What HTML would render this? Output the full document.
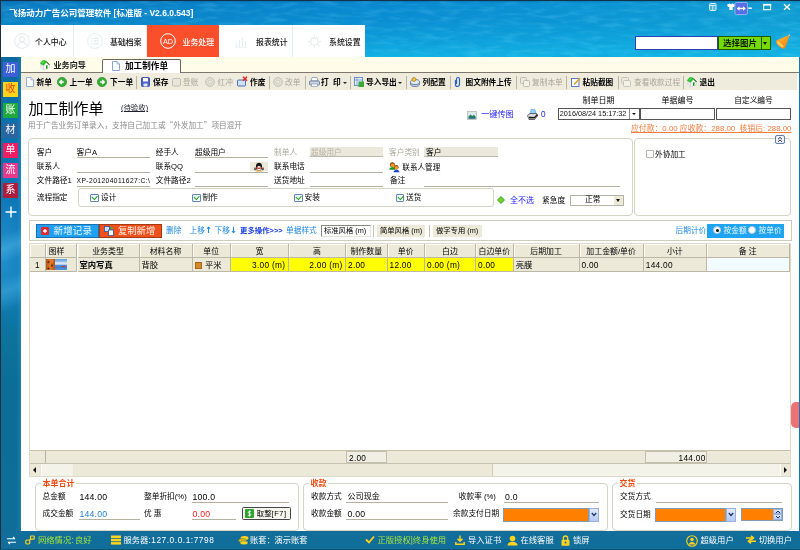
<!DOCTYPE html>
<html lang="zh-CN">
<head>
<meta charset="utf-8">
<title>飞扬动力广告公司管理软件</title>
<style>
*{box-sizing:border-box;margin:0;padding:0}
html,body{width:800px;height:550px;overflow:hidden}
body{font-family:"Liberation Sans","Noto Sans CJK SC",sans-serif;font-size:7.7px;color:#000;position:relative;
 background:#1590c4;}
.a{position:absolute;white-space:nowrap}
#wrap{position:absolute;left:0;top:0;width:800px;height:550px;will-change:transform}
.t{position:absolute;white-space:nowrap;line-height:12px;font-size:7.7px}
#water{left:0;top:0;width:800px;height:550px;
 background:
  linear-gradient(180deg,rgba(4,50,100,.6) 0,rgba(4,50,100,.2) 1.500px,rgba(4,50,100,0) 3px),
  linear-gradient(180deg,rgba(20,185,232,0) 0,rgba(20,185,232,.1) 20px,rgba(20,185,232,.45) 40px,rgba(22,188,234,.8) 57px,rgba(22,188,234,0) 58px),
  linear-gradient(90deg,#0a79c0 0,#0a81c8 25%,#0a8ad2 50%,#0c94d4 75%,#109cd2 100%);}
#leftbar{left:0;top:57px;width:21px;height:474px;background:linear-gradient(160deg,rgba(90,190,235,0) 37%,rgba(90,190,235,.4) 40%,rgba(90,190,235,0) 43%,rgba(90,190,235,0) 46%,rgba(90,190,235,.35) 49%,rgba(90,190,235,0) 53%),radial-gradient(ellipse 26px 60px at 4px 200px,rgba(50,160,225,.55),rgba(50,160,225,0)),linear-gradient(90deg,rgba(255,255,255,0) 80%,rgba(120,210,240,.16) 100%),linear-gradient(180deg,#0a6a9e 0,#0c70aa 15%,#0e78b8 32%,#0f7cb6 48%,#0d749f 58%,#0b6e96 68%,#0e6e98 100%)}
#rightbar{left:798px;top:57px;width:2px;height:474px;background:#1577b5}
#nav{left:1px;top:25.300px;width:364px;height:31.700px;background:#fff}
.nv{position:absolute;top:0;height:32px;font-size:7.900px;line-height:33px;color:#111;font-weight:500;border-right:1px solid #e6ecef}
.nv span{position:absolute;left:34px;top:1px}
.nv.on{background:#fb4f2c;color:#fff;border-right:none}
.ring{position:absolute;left:13px;top:8px;width:15px;height:15px;border:1px solid #e3e8ea;border-radius:50%}
#tabs{left:21px;top:57px;width:777.500px;height:15.500px;background:#fffdea;border-bottom:1.500px solid #7d786b}
#toolbar{left:21px;top:72.500px;width:776px;height:17.500px;background:#efecde}
#main{left:21px;top:72px;width:777.500px;height:459px;background:#fff}
#status{left:0;top:531px;width:800px;height:19px;background:#116e9a}
.sb{position:absolute;left:3px;width:15.200px;height:15px;color:#fff;font-size:10px;line-height:14.500px;text-align:center}
.tb{position:absolute;top:4.300px;font-size:7.7px;line-height:12px;font-weight:bold;white-space:nowrap}
.tb.dis{color:#a9a79b;font-weight:normal}
.sep{position:absolute;top:3px;width:1px;height:13px;background:#b9b6a5}
.ic{position:absolute;top:1px;width:11px;height:11px}
.lbl{position:absolute;font-size:7.7px;line-height:12px;white-space:nowrap}
.ul{position:absolute;height:1px;background:#a5a399}
.box{position:absolute;border:1px solid #d5d3c4;border-radius:4px;background:#fff}
.cb{position:absolute;width:8.600px;height:8.600px;border:1px solid #5f86b4;border-radius:1px;background:linear-gradient(135deg,#e4e8ee,#fff 60%)}
.cb.off{border-color:#b9b7ab;width:7.600px;height:7.600px;background:#fff}.cb.off:after{display:none}
.cb:after{content:"";position:absolute;left:1px;top:.2px;width:4.200px;height:2.600px;border-left:1.700px solid #22a022;border-bottom:1.700px solid #22a022;transform:rotate(-48deg)}
.th{position:absolute;top:0;height:14px;background:#ece9d8;border-right:1px solid #bbb8a6;border-bottom:1px solid #bbb8a6;box-shadow:inset 1px 1px 0 #fbfaf4;text-align:center;font-size:7.900px;line-height:16px;overflow:hidden}
.td{position:absolute;top:14px;height:14px;background:#ece9d8;border-right:1px solid #bbb8a6;border-bottom:1px solid #bbb8a6;font-size:8.300px;line-height:14.500px;padding-left:2px;overflow:hidden}
.y{background:#ffff00}
</style>
</head>
<body>
<div id="wrap">
<div class="a" id="water"></div>
<svg class="a" style="left:0;top:0" width="800" height="57" viewBox="0 0 800 57"><filter id="wt" x="0" y="0" width="100%" height="100%"><feTurbulence type="fractalNoise" baseFrequency="0.05 0.22" numOctaves="3" seed="7"/><feColorMatrix type="matrix" values="0 0 0 0 .25  0 0 0 0 .8  0 0 0 0 .98  1.6 0 0 0 -0.72"/></filter><rect width="800" height="57" filter="url(#wt)" opacity=".3"/><filter id="wd" x="0" y="0" width="100%" height="100%"><feTurbulence type="fractalNoise" baseFrequency="0.045 0.2" numOctaves="3" seed="21"/><feColorMatrix type="matrix" values="0 0 0 0 0  0 0 0 0 .25  0 0 0 0 .5  1.6 0 0 0 -0.72"/></filter><rect width="800" height="57" filter="url(#wd)" opacity=".3"/></svg>
<div class="a" id="leftbar"></div>
<div class="a" id="rightbar"></div>

<!-- title -->
<div class="t" style="left:9.200px;top:6.500px;color:#fff;font-weight:bold;font-size:8.500px">飞扬动力广告公司管理软件 [标准版 - V2.6.0.543]</div>

<!-- nav -->
<div class="a" id="nav">
 <div class="nv" style="left:0;width:72.500px"><svg class="a" style="left:13px;top:8px" width="16" height="16" viewBox="0 0 16 16"><circle cx="8" cy="8" r="7.400" fill="none" stroke="#e6ebee" stroke-width="1"/><circle cx="8" cy="6.300" r="2.500" fill="none" stroke="#e3e8eb" stroke-width="1"/><path d="M3.300 12.800c.5-4.500 8.900-4.500 9.400 0" fill="none" stroke="#e3e8eb" stroke-width="1"/></svg><span>个人中心</span></div>
 <div class="nv" style="left:72.500px;width:73.500px"><svg class="a" style="left:13.500px;top:8px" width="16" height="16" viewBox="0 0 16 16"><circle cx="8" cy="8" r="7.400" fill="none" stroke="#eaeef0" stroke-width="1"/><path d="M4 5.200h1.300M6.500 5.200h5.500M4 8h1.300M6.500 8h5.500M4 10.800h1.300M6.500 10.800h5.500" stroke="#e1e7ea" stroke-width="1.100"/></svg><span style="left:36.500px">基础档案</span></div>
 <div class="nv on" style="left:146px;width:72px"><svg class="a" style="left:13px;top:8px" width="16" height="16" viewBox="0 0 16 16"><circle cx="8" cy="8" r="7.300" fill="none" stroke="#fff" stroke-width="1"/><text x="8" y="10.600" font-size="7.300" text-anchor="middle" fill="#fff" font-family="Liberation Sans, sans-serif">AD</text></svg><span style="left:35.500px">业务处理</span></div>
 <div class="nv" style="left:218px;width:73.500px"><svg class="a" style="left:16px;top:10px" width="12" height="13" viewBox="0 0 12 13"><path d="M1.500 12V8.500M4.500 12V5M7.500 12V2M10.500 12V6" stroke="#e6ecef" stroke-width="1.100"/><path d="M0 12.500h12" stroke="#eef2f4" stroke-width=".8"/></svg><span style="left:37px">报表统计</span></div>
 <div class="nv" style="left:291.500px;width:72.500px;border-right:none"><svg class="a" style="left:14px;top:9px" width="15" height="15" viewBox="0 0 15 15"><circle cx="7.500" cy="7.500" r="3.800" fill="none" stroke="#e3e9ec" stroke-width="1"/><path d="M7.500 .8v2M7.500 12.200v2M.8 7.500h2M12.200 7.500h2M2.800 2.800l1.400 1.400M10.800 10.800l1.400 1.400M2.800 12.200l1.400-1.400M10.800 4.200l1.400-1.400" stroke="#e3e9ec" stroke-width="1"/></svg><span style="left:36.500px">系统设置</span></div>
</div>

<!-- search -->
<div class="a" style="left:635px;top:36px;width:83px;height:14px;background:#fff;border:1px solid #2a3fb0"></div>
<div class="a" style="left:718px;top:36px;width:44px;height:14px;background:#74da00;border:1px solid #1f5800;font-size:8.5px;line-height:12px;text-align:center;font-weight:bold;color:#102000">选择图片</div>
<div class="a" style="left:761px;top:36px;width:9.800px;height:14px;background:#74da00;border:1px solid #1f5800"><i style="position:absolute;left:1.400px;top:4.500px;border:2.500px solid transparent;border-top:3px solid #111;border-bottom:none"></i></div>
<svg class="a" style="left:774px;top:33px" width="20" height="18" viewBox="0 0 20 18"><defs><linearGradient id="cg" x1="0" y1="0" x2="1" y2="1"><stop offset="0" stop-color="#ffc24a"/><stop offset=".55" stop-color="#fb9a1e"/><stop offset="1" stop-color="#e87808"/></linearGradient></defs><path d="M15.600 1.800L2.300 7.600Q1.500 12 10.300 15.700Q11.500 15.500 15.600 1.800z" fill="url(#cg)"/><ellipse cx="6.300" cy="11.500" rx="5.600" ry="2.300" transform="rotate(42 6.300 11.500)" fill="#f08a10"/><ellipse cx="6.200" cy="11.300" rx="4.300" ry="1.500" transform="rotate(42 6.200 11.300)" fill="#ffc85a"/><circle cx="15.300" cy="2.100" r=".7" fill="#fff3d8"/></svg>
<!-- window buttons -->
<svg class="a" style="left:705px;top:2px" width="95" height="16" viewBox="0 0 95 16">
 <rect x="4.500" y="1.500" width="6.500" height="7" rx="1" fill="rgba(255,255,255,.25)" stroke="#d9eef8" stroke-width="1"/><path d="M5 3.500h5.500M7.800 3.500v5" stroke="#d9eef8" stroke-width=".9"/><path d="M6 .8v1.200M9.500 .8v1.200" stroke="#d9eef8" stroke-width=".8"/>
 <path d="M22 2.800l2.500-1.200 1.500 1 1.500-1 2.500 1.200-1 2.200h-1.300v3h-3.400v-3H23z" fill="#fff"/>
 <rect x="30" y=".5" width="12.500" height="12" rx="1.500" fill="#5570e4" stroke="#a9b8f4" stroke-width=".8"/><path d="M32.500 6.500h7.500" stroke="#fff" stroke-width="1.400" fill="none"/><path d="M31.800 6.500l2.700-2.200v4.400zM40.700 6.500l-2.700-2.200v4.400z" fill="#fff"/>
 <path d="M43.300 6.200h3.500" stroke="#fff" stroke-width="1.500"/>
 <rect x="58.600" y="2.700" width="7" height="5" fill="none" stroke="#fff" stroke-width="1.100"/><path d="M58 2.700h8.200" stroke="#fff" stroke-width="1.700"/>
 <path d="M79 2.200l6 5.600M85 2.200l-6 5.600" stroke="#fff" stroke-width="1.500"/>
</svg>

<div class="a" id="main"></div>
<div class="a" id="tabs">
 <svg class="a" style="left:19.200px;top:2.800px" width="10" height="10" viewBox="0 0 10 10"><path d="M.8 4.500L3.600 5.800V9.800L.8 7.600z" fill="#f4f2f6" stroke="#b9b3c4" stroke-width=".4"/><path d="M3.600 5.800L6.500 2.200 9.300 5V7.800L3.600 9.800z" fill="#fff" stroke="#b9b3c4" stroke-width=".4"/><path d="M6.500 1.200L9.900 4.600 9.200 5.200 6.200 2.200z" fill="#0e6a12"/><path d="M.1 3.600L3 .2 6.600 1.200 3.600 5.300z" fill="#22c422" stroke="#129416" stroke-width=".4"/><path d="M1.600 2.900L3.200 1.200 4.600 1.600 3 3.500z" fill="#5cf05c" opacity=".8"/><path d="M6 5.600L7.500 5V8.400L6 9z" fill="#0f9a1a"/></svg>
 <div class="t" style="left:32.500px;top:3px;font-weight:bold;color:#222;font-size:8.100px">业务向导</div>
 <div class="a" style="left:81px;top:1.500px;width:78.500px;height:14.500px;background:#fff;border:1.500px solid #6a665b;border-bottom:none;border-radius:2px 2px 0 0"></div>
 <svg class="a" style="left:91px;top:4px" width="8" height="10" viewBox="0 0 8 10"><path d="M.5.5h4.500L7.500 3v6.500h-7z" fill="#fff" stroke="#7b9bd0" stroke-width=".9"/><path d="M5 .5V3h2.500" fill="#cfe0f5" stroke="#7b9bd0" stroke-width=".7"/></svg>
 <div class="t" style="left:104px;top:3px;font-weight:bold;font-size:8.600px">加工制作单</div>
</div>
<div class="a" id="toolbar">
 <svg class="a" style="left:5px;top:4.700px" width="8" height="10" viewBox="0 0 8 10"><path d="M.5.5h4.500L7.500 3v6.500h-7z" fill="#fff" stroke="#8aa7d6" stroke-width=".9"/><path d="M5 .5V3h2.500" fill="#d5e4f7" stroke="#8aa7d6" stroke-width=".7"/></svg>
 <div class="tb" style="left:15.5px">新单</div>
 <svg class="a" style="left:36px;top:4.700px" width="10" height="10" viewBox="0 0 10 10"><circle cx="5" cy="5" r="4.600" fill="#35b035" stroke="#1d7a1d" stroke-width=".6"/><path d="M6.800 5H3M4.800 3L2.800 5l2 2" stroke="#fff" stroke-width="1.500" fill="none"/></svg>
 <div class="tb" style="left:48.5px">上一单</div>
 <svg class="a" style="left:76px;top:4.700px" width="10" height="10" viewBox="0 0 10 10"><circle cx="5" cy="5" r="4.600" fill="#35b035" stroke="#1d7a1d" stroke-width=".6"/><path d="M3.200 5h3.800M5.200 3l2 2-2 2" stroke="#fff" stroke-width="1.500" fill="none"/></svg>
 <div class="tb" style="left:89px">下一单</div>
 <i class="sep" style="left:115px"></i>
 <svg class="a" style="left:120px;top:4.700px" width="9" height="10" viewBox="0 0 9 10"><rect x=".5" y=".5" width="8" height="9" rx="1" fill="#4a62c8" stroke="#2c3f9a" stroke-width=".8"/><rect x="2" y="1" width="5" height="3.500" fill="#fff"/><rect x="2.500" y="6.500" width="4" height="3" fill="#dfe5f7"/></svg>
 <div class="tb" style="left:132px">保存</div>
 <svg class="a" style="left:151px;top:4.700px" width="9" height="10" viewBox="0 0 9 10"><rect x=".5" y="1.500" width="8" height="7.500" rx="1" fill="#e9e7dc" stroke="#bdbaad" stroke-width=".9"/></svg>
 <div class="tb dis" style="left:162px">登账</div>
 
 <svg class="a" style="left:184px;top:4.700px" width="10" height="10" viewBox="0 0 10 10"><circle cx="5" cy="5" r="4.300" fill="#e9e7dc" stroke="#b8b5a8" stroke-width=".9"/><circle cx="5" cy="5" r="2.200" fill="none" stroke="#c5c2b5" stroke-width=".8"/></svg>
 <div class="tb dis" style="left:196.5px">红冲</div>
 <svg class="a" style="left:216px;top:3.700px" width="11" height="11" viewBox="0 0 11 11"><rect x=".5" y="4" width="8" height="6" rx="1" fill="#cfe0fa" stroke="#3c62b8" stroke-width=".9"/><path d="M6 .8l4 4M10 .8l-4 4" stroke="#e02020" stroke-width="1.400"/></svg>
 <div class="tb" style="left:229px">作废</div>
 <i class="sep" style="left:248px"></i>
 <svg class="a" style="left:252px;top:4.700px" width="10" height="10" viewBox="0 0 10 10"><circle cx="5" cy="5" r="4.300" fill="#e9e7dc" stroke="#b8b5a8" stroke-width=".9"/><circle cx="5" cy="5" r="2.200" fill="none" stroke="#c5c2b5" stroke-width=".8"/></svg>
 <div class="tb dis" style="left:264px">改单</div>
 <i class="sep" style="left:283.5px"></i>
 <svg class="a" style="left:288px;top:4.700px" width="11" height="10" viewBox="0 0 11 10"><path d="M3 .5h5l1 3.500H2z" fill="#fff" stroke="#7a8aa8" stroke-width=".7"/><rect x=".5" y="4" width="10" height="4" rx="1" fill="#c9d3e6" stroke="#5d6c8c" stroke-width=".8"/><rect x="2.500" y="7" width="6" height="2.500" fill="#fff" stroke="#7a8aa8" stroke-width=".6"/></svg>
 <div class="tb" style="left:300px">打&nbsp;&nbsp;印</div>
 <i class="a" style="left:322px;top:9px;border:2px solid transparent;border-top:2.500px solid #222;border-bottom:none"></i>
 <i class="sep" style="left:329px"></i>
 <svg class="a" style="left:333px;top:4.700px" width="10" height="10" viewBox="0 0 10 10"><rect x=".5" y=".5" width="8" height="8" fill="#eaf1fb" stroke="#5f86c6" stroke-width=".9"/><path d="M.5 3h8M3 .5v8" stroke="#5f86c6" stroke-width=".7"/><rect x="4.500" y="4.500" width="5.500" height="5.500" fill="#3aa83a"/></svg>
 <div class="tb" style="left:345px">导入导出</div>
 <i class="a" style="left:377px;top:9px;border:2px solid transparent;border-top:2.500px solid #222;border-bottom:none"></i>
 <i class="sep" style="left:384.5px"></i>
 <svg class="a" style="left:389px;top:4.700px" width="10" height="10" viewBox="0 0 10 10"><ellipse cx="5" cy="7" rx="4.500" ry="2.500" fill="#c7d4e8" stroke="#55698f" stroke-width=".8"/><ellipse cx="5" cy="5" rx="4.500" ry="2.500" fill="#e6edf8" stroke="#55698f" stroke-width=".8"/><circle cx="4" cy="2.500" r="2" fill="#f2c53d" stroke="#9a6c10" stroke-width=".6"/></svg>
 <div class="tb" style="left:401.5px">列配置</div>
 <i class="sep" style="left:429px"></i>
 <svg class="a" style="left:433px;top:3.700px" width="7" height="12" viewBox="0 0 7 12"><path d="M1.500 4v4.500a2 2 0 004 0V3a1.500 1.500 0 00-3 0v5" fill="none" stroke="#2d5fc4" stroke-width="1.200"/></svg>
 <div class="tb" style="left:444.5px">图文附件上传</div>
 <i class="sep" style="left:494.5px"></i>
 <svg class="a" style="left:498.5px;top:4.700px" width="10" height="10" viewBox="0 0 10 10"><rect x=".5" y=".5" width="6" height="6" rx="1" fill="#eceade" stroke="#b9b6a8" stroke-width=".9"/><rect x="3.500" y="3.500" width="6" height="6" rx="1" fill="#f3f1e8" stroke="#b9b6a8" stroke-width=".9"/></svg>
 <div class="tb dis" style="left:511px">复制本单</div>
 <i class="sep" style="left:545px"></i>
 <svg class="a" style="left:549.5px;top:4.700px" width="10" height="10" viewBox="0 0 10 10"><rect x=".5" y="1.500" width="7.500" height="8" fill="#fff" stroke="#4a6fbd" stroke-width=".9"/><path d="M3.500 7L9 1.200" stroke="#e0a020" stroke-width="1.600"/><path d="M3 7.500l1-.3-.7-.7z" fill="#333"/></svg>
 <div class="tb" style="left:561.5px">粘贴截图</div>
 <i class="sep" style="left:596.5px"></i>
 <svg class="a" style="left:600px;top:4.700px" width="10" height="10" viewBox="0 0 10 10"><rect x=".5" y=".5" width="7" height="6" rx="1" fill="#eceade" stroke="#c2bfb2" stroke-width=".9"/><rect x="2.500" y="3.500" width="7" height="6" rx="1" fill="#f3f1e8" stroke="#c2bfb2" stroke-width=".9"/></svg>
 <div class="tb dis" style="left:613px">查看收款过程</div>
 <i class="sep" style="left:662px"></i>
 <svg class="a" style="left:666px;top:4.200px" width="10" height="10" viewBox="0 0 10 10"><path d="M.8 4.500L3.600 5.800V9.800L.8 7.600z" fill="#f4f2f6" stroke="#b9b3c4" stroke-width=".4"/><path d="M3.600 5.800L6.500 2.200 9.300 5V7.800L3.600 9.800z" fill="#fff" stroke="#b9b3c4" stroke-width=".4"/><path d="M6.500 1.200L9.900 4.600 9.200 5.200 6.200 2.200z" fill="#0e6a12"/><path d="M.1 3.600L3 .2 6.600 1.200 3.600 5.300z" fill="#22c422" stroke="#129416" stroke-width=".4"/><path d="M1.600 2.900L3.200 1.200 4.600 1.600 3 3.500z" fill="#5cf05c" opacity=".8"/><path d="M6 5.600L7.500 5V8.400L6 9z" fill="#0f9a1a"/></svg>
 <div class="tb" style="left:678.5px">退出</div>
 </div>
<!-- sidebar buttons -->
<div class="sb" style="top:62px;background:#3f5fd8;color:#fff">加</div>
<div class="sb" style="top:82px;background:#ffd21c;color:#e0401c">收</div>
<div class="sb" style="top:102.5px;background:#1fa83c;color:#fff">账</div>
<div class="sb" style="top:123px;background:#2c66a0;color:#fff">材</div>
<div class="sb" style="top:143px;background:#ee1e62;color:#fff">单</div>
<div class="sb" style="top:163px;background:#e83a8c;color:#fff">流</div>
<div class="sb" style="top:183px;background:#ae1c3c;color:#fff">系</div>
<svg class="a" style="left:5px;top:206px" width="12" height="12" viewBox="0 0 12 12"><path d="M6 0.500v11M0.500 6h11" stroke="#fff" stroke-width="1.400"/></svg>
<!-- header -->
<div class="t" style="left:28.500px;top:99px;font-size:15px;line-height:20px">加工制作单</div>
<div class="t" style="left:121px;top:102px;font-size:7.400px;text-decoration:underline;color:#223">(待验收)</div>
<div class="t" style="left:28px;top:119.300px;color:#8a8a8a;font-size:7.650px">用于广告业务订单录入，支持自己加工或<span style="font-family:'Noto Sans CJK SC',sans-serif">“</span>外发加工<span style="font-family:'Noto Sans CJK SC',sans-serif">”</span>项目混开</div>
<svg class="a" style="left:467px;top:110.500px" width="10" height="9" viewBox="0 0 10 9"><rect x=".4" y=".4" width="9.200" height="8.200" fill="#e2e2e2" stroke="#a8a8a8" stroke-width=".6"/><rect x="1.500" y="1.500" width="7" height="6" fill="#d6ecfa"/><path d="M1.500 5.500l2-2 1.800 1.500 1.500-1.200 1.700 1.700v2h-7z" fill="#2a7f68"/><path d="M1.500 6.500h7v1h-7z" fill="#1d5f8a"/></svg>
<div class="t" style="left:481px;top:109px;color:#1a1aff;font-size:8.200px">一键传图</div>
<svg class="a" style="left:527px;top:108.800px" width="11" height="11" viewBox="0 0 11 11"><path d="M4 .5h4l1.200 4.500H3z" fill="#8fd0ff" stroke="#4a90c8" stroke-width=".5"/><path d="M.5 6.500L3 4.500h6.500l1 2.500-3 3.500H2z" fill="#d8dce0" stroke="#333" stroke-width=".7"/><path d="M2 8.500l5.500.2 3-3.200" stroke="#111" stroke-width="1.300" fill="none"/><path d="M2.500 10h5" stroke="#555" stroke-width=".8"/></svg>
<div class="t" style="left:541px;top:109px;color:#1a1aff;font-size:8.200px">0</div>
<div class="t" style="left:582.500px;top:95.300px;font-size:8px">制单日期</div>
<div class="t" style="left:661.500px;top:95.300px;font-size:8px">单据编号</div>
<div class="t" style="left:734.300px;top:95.300px;font-size:7.700px">自定义编号</div>
<div class="a" style="left:558px;top:108px;width:82px;height:12px;background:#fff;border:1px solid #555"><span class="t" style="left:.8px;top:-1px;font-size:7.300px;color:#111;letter-spacing:-.02px">2016/08/24 15:17:32</span><i class="a" style="left:69.500px;top:0;width:10.500px;height:10px;border-left:1px solid #888;background:#fff"></i><i class="a" style="left:72.800px;top:3.800px;border:2.300px solid transparent;border-top:2.800px solid #111;border-bottom:none"></i></div>
<div class="a" style="left:640px;top:108px;width:75px;height:12px;background:#fff;border:1px solid #555"></div>
<div class="a" style="left:716px;top:108px;width:75px;height:12px;background:#fff;border:1px solid #555"></div>
<div class="t" style="left:631px;top:122.5px;color:#f47a3a;text-decoration:underline;font-size:7.850px">应付款：0.00 应收款：288.00&nbsp; 核销后: 288.00</div>

<!-- form -->
<div class="box" style="left:28px;top:138px;width:605px;height:78px"></div>
<div class="box" style="left:634px;top:138px;width:157px;height:78px"></div>
<div class="t" style="left:36.8px;top:146.8px;">客户</div><div class="t" style="left:76.6px;top:146.8px;">客户A</div><i class="ul" style="left:77px;top:157.3px;width:73px;background:#b3b09f"></i>
<div class="t" style="left:155.7px;top:146.8px;">经手人</div><div class="t" style="left:195px;top:146.8px;">超级用户</div><i class="ul" style="left:195px;top:157.3px;width:73px;background:#b3b09f"></i>
<div class="t" style="left:274px;top:146.8px;color:#aaa79b">制单人</div><div class="a" style="left:310px;top:147px;width:73px;height:10px;background:#ebe9dc;border-bottom:1px solid #bdbaab"></div><div class="t" style="left:311px;top:146.8px;color:#b5b2a6">超级用户</div>
<div class="t" style="left:389px;top:146.8px;color:#aaa79b">客户类别</div><div class="a" style="left:424px;top:147px;width:74px;height:10px;background:#ebe9dc;border-bottom:1px solid #bdbaab"></div><div class="t" style="left:426px;top:146.8px;">客户</div>
<div class="t" style="left:36.8px;top:161.0px;">联系人</div><i class="ul" style="left:77px;top:171.7px;width:73px;background:#b3b09f"></i>
<div class="t" style="left:155.7px;top:161.0px;">联系QQ</div><i class="ul" style="left:195px;top:171.7px;width:73px;background:#b3b09f"></i>
<div class="a" style="left:249.500px;top:162px;width:18.300px;height:9.300px;background:#ece9d8"></div><svg class="a" style="left:254px;top:161.800px" width="10" height="10" viewBox="0 0 10 10"><ellipse cx="5" cy="4.800" rx="3.100" ry="4" fill="#1a1a1a"/><ellipse cx="5" cy="6.300" rx="2" ry="2.300" fill="#fff"/><path d="M1.300 5.600Q.3 7.500 1.600 8M8.700 5.600Q9.700 7.500 8.400 8" stroke="#1a1a1a" stroke-width="1.200" fill="none"/><path d="M2.300 5q2.700 1.500 5.400 0v1.200q-2.700 1.500-5.400 0z" fill="#e02a1c"/><ellipse cx="3.400" cy="9.100" rx="1.500" ry=".7" fill="#f2a818"/><ellipse cx="6.600" cy="9.100" rx="1.500" ry=".7" fill="#f2a818"/></svg>
<div class="t" style="left:274px;top:161.0px;">联系电话</div><i class="ul" style="left:310px;top:171.7px;width:73px;background:#b3b09f"></i>
<svg class="a" style="left:389px;top:161.800px" width="11" height="11" viewBox="0 0 11 11"><circle cx="3.400" cy="2.800" r="2.500" fill="#8a4a14"/><circle cx="3.600" cy="3.400" r="1.800" fill="#f59a1c"/><path d="M.3 7.800c0-3.600 6.200-3.600 6.200 0z" fill="#189a28"/><circle cx="7.300" cy="5.300" r="2.300" fill="#8a4a14"/><circle cx="7.400" cy="5.800" r="1.700" fill="#f59a1c"/><path d="M4.500 10.300c0-3.400 6-3.400 6 0z" fill="#1a44d8"/></svg>
<div class="t" style="left:402.3px;top:162.0px;font-size:7.600px">联系人管理</div>
<div class="t" style="left:36.8px;top:175.0px;">文件路径1</div><div class="t" style="left:76.6px;top:175.0px;font-size:6.700px;letter-spacing:.42px">XP-201204011627:C:&#92;</div><i class="ul" style="left:77px;top:185.7px;width:73px;background:#b3b09f"></i>
<div class="t" style="left:155.7px;top:175.0px;">文件路径2</div><i class="ul" style="left:195px;top:185.7px;width:73px;background:#b3b09f"></i>
<div class="t" style="left:274px;top:175.0px;">送货地址</div><i class="ul" style="left:310px;top:185.7px;width:73px;background:#b3b09f"></i>
<div class="t" style="left:390px;top:175.0px;">备注</div><i class="ul" style="left:424px;top:185.7px;width:196px;background:#b3b09f"></i>
<div class="t" style="left:36.8px;top:191.8px;">流程指定</div>
<div class="box" style="left:78.300px;top:188.200px;width:416px;height:19.200px;border-radius:3px"></div>
<i class="cb" style="left:90.2px;top:193.5px"></i><div class="t" style="left:101px;top:191.8px;">设计</div>
<i class="cb" style="left:192.2px;top:193.5px"></i><div class="t" style="left:202.4px;top:191.8px;">制作</div>
<i class="cb" style="left:294.2px;top:193.5px"></i><div class="t" style="left:304.6px;top:191.8px;">安装</div>
<i class="cb" style="left:395.8px;top:193.5px"></i><div class="t" style="left:406px;top:191.8px;">送货</div>
<svg class="a" style="left:497px;top:196px" width="8" height="8" viewBox="0 0 8 8"><path d="M4 .5L7.500 4 4 7.500.5 4z" fill="#6ad12e" stroke="#2e8a10" stroke-width=".8"/></svg>
<div class="t" style="left:510px;top:194.5px;color:#1a1aff;font-size:8px">全不选</div>
<div class="t" style="left:542px;top:194.5px;">紧急度</div>
<div class="a" style="left:570px;top:195px;width:54px;height:11px;background:#fff;border:1px solid #b5b2a3"><span class="t" style="left:14px;top:-2px">正常</span><i class="a" style="left:43px;top:0;width:9px;height:9px;background:#ece9d8"></i><i class="a" style="left:45px;top:3px;border:2.500px solid transparent;border-top:3px solid #111;border-bottom:none"></i></div>
<i class="cb off" style="left:646px;top:150.2px"></i><div class="t" style="left:655px;top:149px;">外协加工</div>
<svg class="a" style="left:775px;top:135px" width="10" height="9" viewBox="0 0 10 9"><rect x=".5" y=".5" width="9" height="8" rx="1.500" fill="#eef3fa" stroke="#4f6f9f" stroke-width=".9"/><path d="M3 4.200l2-1.800 2 1.800M3 6.800L5 5l2 1.800" stroke="#222" stroke-width=".9" fill="none"/></svg>
<!-- grid toolbar -->
<div class="a" style="left:29px;top:220px;width:762.500px;height:21px;background:#fff;border:1px solid #cfccbc"></div>
<div class="a" style="left:36px;top:224px;width:63px;height:14px;background:#1fa0f0;border:1px solid #1a6fb0"></div>
<svg class="a" style="left:41px;top:227px" width="8" height="8" viewBox="0 0 8 8"><rect width="8" height="8" rx="1" fill="#e8262a"/><path d="M4 2v4M2 4h4" stroke="#fff" stroke-width="1.300"/></svg>
<div class="t" style="left:53.5px;top:225.3px;color:#e8f8ff;font-size:9.500px;letter-spacing:.15px">新增记录</div>
<div class="a" style="left:99px;top:224px;width:63px;height:14px;background:#f0501c;border:1px solid #a83a12"></div>
<svg class="a" style="left:104px;top:226px" width="10" height="10" viewBox="0 0 10 10"><rect x=".5" y=".5" width="5" height="5" fill="#cfe4ff" stroke="#2a4fb0" stroke-width=".8"/><rect x="4.500" y="4" width="5" height="5.500" fill="#fff" stroke="#2a4fb0" stroke-width=".8"/><circle cx="7.500" cy="2" r="1.300" fill="#3ab03a"/></svg>
<div class="t" style="left:118px;top:225.3px;color:#fff0e8;font-size:9.300px">复制新增</div>
<div class="t" style="left:166px;top:225.3px;color:#1886e0">删除</div>
<div class="t" style="left:189.5px;top:225.3px;color:#1886e0">上移<span style="font-family:'DejaVu Sans',sans-serif;font-size:8.500px;line-height:8px;font-weight:bold">↑</span></div>
<div class="t" style="left:214.5px;top:225.3px;color:#1886e0">下移<span style="font-family:'DejaVu Sans',sans-serif;font-size:8.500px;line-height:8px;font-weight:bold">↓</span></div>
<div class="t" style="left:240px;top:225.3px;color:#1a3fe0;font-weight:bold;font-size:7.400px">更多操作&gt;&gt;&gt;</div>
<div class="t" style="left:286px;top:225.3px;color:#1886e0">单据样式</div>
<div class="a" style="left:321px;top:225px;width:50px;height:12px;background:#fff;border:1px solid #8a887c;border-right-color:#e8e6da;border-bottom-color:#e8e6da"></div>
<div class="t" style="left:324px;top:225.3px;font-size:7.300px">标准风格 (m)</div>
<i class="a" style="left:373px;top:225px;width:1px;height:12px;background:#c5c2b2"></i>
<div class="a" style="left:377px;top:225px;width:48px;height:12px;background:#ece9d8"></div>
<div class="t" style="left:380px;top:225.3px;font-size:7.300px">简单风格 (m)</div>
<i class="a" style="left:429px;top:225px;width:1px;height:12px;background:#c5c2b2"></i>
<div class="a" style="left:433px;top:225px;width:49px;height:12px;background:#ece9d8"></div>
<div class="t" style="left:436px;top:225.3px;font-size:7.300px">做字专用 (m)</div>
<div class="t" style="left:675.5px;top:225.3px;color:#1886e0">后期计价</div>
<div class="a" style="left:707px;top:224px;width:77px;height:14px;background:#1fa4f2"></div>
<i class="a" style="left:713px;top:226.300px;width:8px;height:8px;border-radius:50%;background:#fff;border:1px solid #b8c8d8"></i><i class="a" style="left:715.500px;top:228.800px;width:3px;height:3px;border-radius:50%;background:#111"></i>
<div class="t" style="left:723.5px;top:225.3px;color:#eaf8ff">按金额</div>
<i class="a" style="left:748px;top:226.300px;width:8px;height:8px;border-radius:50%;background:#fff;border:1px solid #b8c8d8"></i>
<div class="t" style="left:758.5px;top:225.3px;color:#eaf8ff">按单价</div>
<!-- grid -->
<div class="a" style="left:29px;top:243px;width:762px;height:233.500px;background:#fff;border:1px solid #dcd9c9"></div>
<div class="a" id="grid" style="left:30px;top:243.500px;width:760px;height:28px">
<div class="th" style="left:0px;width:15.5px"></div>
<div class="th" style="left:15.5px;width:31.7px;text-align:left;padding-left:3.200px">图样</div>
<div class="th" style="left:47.5px;width:62.0px">业务类型</div>
<div class="th" style="left:109.5px;width:53.0px">材料名称</div>
<div class="th" style="left:162.5px;width:38.5px">单位</div>
<div class="th" style="left:201px;width:57.75px">宽</div>
<div class="th" style="left:258.75px;width:57.25px">高</div>
<div class="th" style="left:316px;width:41.5px">制作数量</div>
<div class="th" style="left:357.5px;width:37.5px">单价</div>
<div class="th" style="left:395px;width:51px">白边</div>
<div class="th" style="left:446px;width:37.75px">白边单价</div>
<div class="th" style="left:483.75px;width:65.75px">后期加工</div>
<div class="th" style="left:549.5px;width:64.25px">加工金额/单价</div>
<div class="th" style="left:613.75px;width:63.25px">小计</div>
<div class="th" style="left:677px;width:82.5px">备 注</div>
<div class="td" style="left:0px;width:15.5px;text-align:center;padding-left:0">1</div>
<div class="td" style="left:15.5px;width:31.7px;"><i style="position:absolute;left:.6px;top:1.200px;width:8.500px;height:11.800px;background:radial-gradient(circle 1.600px at 2.500px 3px,#3a1408 0,rgba(58,20,8,0) 100%),radial-gradient(circle 1.600px at 6px 6.500px,#3a1408 0,rgba(58,20,8,0) 100%),radial-gradient(circle 1.500px at 2.500px 9.500px,#4a1c0a 0,rgba(74,28,10,0) 100%),radial-gradient(circle 1.300px at 6.500px 2px,#f0a040 0,rgba(240,160,64,0) 100%),linear-gradient(90deg,#b4561c,#e07a28 50%,#b8521a)"></i><i style="position:absolute;left:9.100px;top:1.200px;width:12.800px;height:11.800px;background:radial-gradient(ellipse 2.200px 1px at 8.500px 7.500px,#d83020 0,#d83020 60%,rgba(216,48,32,0) 100%),linear-gradient(180deg,#5f9ee0 0,#8fbcea 22%,#e4eef8 36%,#c9dcf0 48%,#4f8ed6 58%,#3f7fcc 80%,#5a98dc 100%)"></i></div>
<div class="td" style="left:47.5px;width:62.0px;font-weight:bold">室内写真</div>
<div class="td" style="left:109.5px;width:53.0px;">背胶</div>
<div class="td" style="left:162.5px;width:38.5px;"><i style="display:inline-block;width:7.500px;height:7.500px;background:#d8862a;border:1px solid #a8641a;vertical-align:-1.500px;margin-right:3px"></i>平米</div>
<div class="td y" style="left:201px;width:57.75px;text-align:right;padding-right:2.500px;letter-spacing:.28px">3.00 (m)</div>
<div class="td y" style="left:258.75px;width:57.25px;text-align:right;padding-right:2.500px;letter-spacing:.28px">2.00 (m)</div>
<div class="td y" style="left:316px;width:41.5px;;letter-spacing:.28px">2.00</div>
<div class="td y" style="left:357.5px;width:37.5px;;letter-spacing:.28px">12.00</div>
<div class="td y" style="left:395px;width:51px;;letter-spacing:.28px">0.00 (m)</div>
<div class="td y" style="left:446px;width:37.75px;;letter-spacing:.28px">0.00</div>
<div class="td" style="left:483.75px;width:65.75px;">亮膜</div>
<div class="td" style="left:549.5px;width:64.25px;;letter-spacing:.28px">0.00</div>
<div class="td" style="left:613.75px;width:63.25px;;letter-spacing:.28px">144.00</div>
<div class="td" style="left:677px;width:82.5px;background:#f2fbff"></div>
</div>
<div class="a" style="left:30px;top:449.700px;width:760px;height:14.700px;background:#ece9d8;border-top:1px solid #c5c2b0;border-bottom:1px solid #c5c2b0"></div>
<i class="a" style="left:45px;top:451px;width:1px;height:12px;background:#b5b2a0"></i>
<div class="a" style="left:346px;top:451px;width:41px;height:12px;background:#f1efe3;border:1px solid #c2bfae"></div>
<div class="t" style="left:349px;top:451.5px;font-size:8.300px;letter-spacing:.28px">2.00</div>
<div class="a" style="left:645px;top:451px;width:62px;height:12px;background:#f1efe3;border:1px solid #c2bfae"></div>
<div class="t" style="left:678.5px;top:451.5px;font-size:8.300px;letter-spacing:.28px">144.00</div>
<div class="a" style="left:30px;top:464.400px;width:760px;height:11.600px;background:#f4f3ea"></div>
<div class="a" style="left:72.500px;top:464.400px;width:420.500px;height:11.600px;background:#ece9d8;border-right:1px solid #cfccbb"></div>
<div class="a" style="left:30px;top:464.400px;width:11.500px;height:11.600px;background:#ece9d8;border-right:1px solid #fff"></div><i class="a" style="left:33px;top:467px;border:3px solid transparent;border-right:3px solid #111;border-left:none"></i>
<div class="a" style="left:780px;top:464.400px;width:10px;height:11.600px;background:#ece9d8;border-left:1px solid #fff"></div><i class="a" style="left:784px;top:467px;border:3px solid transparent;border-left:3px solid #111;border-right:none"></i>
<div class="a" style="left:791px;top:401.600px;width:7.500px;height:26.400px;background:#ee7175;border-radius:5px 0 0 5px"></div>
<!-- bottom -->
<div class="box" style="left:35px;top:483px;width:264px;height:48px;border-radius:4px"></div><div class="t" style="left:41px;top:477.500px;background:#fff;padding:0 1.500px;color:#f04a10;font-weight:bold;font-size:8px">本单合计</div>
<div class="box" style="left:303px;top:483px;width:304.5px;height:48px;border-radius:4px"></div><div class="t" style="left:309px;top:477.500px;background:#fff;padding:0 1.500px;color:#f04a10;font-weight:bold;font-size:8px">收款</div>
<div class="box" style="left:612px;top:483px;width:179.5px;height:48px;border-radius:4px"></div><div class="t" style="left:618px;top:477.500px;background:#fff;padding:0 1.500px;color:#f04a10;font-weight:bold;font-size:8px">交货</div>
<div class="t" style="left:42.5px;top:491px;">总金额</div>
<div class="t" style="left:79.5px;top:491px;font-size:8.700px;letter-spacing:.2px">144.00</div>
<div class="t" style="left:144px;top:491px;">整单折扣(%)</div>
<div class="t" style="left:192.5px;top:491px;font-size:8.700px;letter-spacing:.2px">100.0</div>
<i class="ul" style="left:192px;top:502px;width:97px;background:#b3b09f"></i>
<div class="t" style="left:42.5px;top:508px;">成交金额</div>
<div class="t" style="left:79.5px;top:508px;color:#1e7fd0;font-size:8.700px;letter-spacing:.2px">144.00</div>
<i class="ul" style="left:79px;top:519px;width:60.5px;background:#b3b09f"></i>
<div class="t" style="left:144px;top:508px;">优 惠</div>
<div class="t" style="left:192.5px;top:508px;color:#f02020;font-size:8.700px;letter-spacing:.2px">0.00</div>
<i class="ul" style="left:192px;top:519px;width:44px;background:#b3b09f"></i>
<div class="a" style="left:241.800px;top:507.200px;width:48.800px;height:12.800px;background:#f6f5ee;border:1px solid #444;border-radius:1.500px"></div>
<svg class="a" style="left:245px;top:509px" width="9" height="9" viewBox="0 0 9 9"><rect width="9" height="9" rx="1" fill="#2fa52f"/><path d="M6 2.800C5 2 3.200 2.300 3.300 3.500 3.400 4.800 5.800 4.200 5.800 5.600 5.800 6.800 4 7 3 6.200M4.500 1.500v6" stroke="#fff" stroke-width=".9" fill="none"/></svg>
<div class="t" style="left:256.8px;top:508px;font-size:7.400px">取整<span style="letter-spacing:.6px">[F7]</span></div>
<div class="t" style="left:311px;top:491px;">收款方式</div>
<div class="t" style="left:347.5px;top:491px;font-size:8.100px">公司现金</div>
<i class="ul" style="left:346px;top:502px;width:101.5px;background:#b3b09f"></i>
<div class="t" style="left:311px;top:508px;">收款金额</div>
<div class="t" style="left:347.5px;top:508px;font-size:8.700px;letter-spacing:.2px">0.00</div>
<i class="ul" style="left:346px;top:519px;width:101.5px;background:#b3b09f"></i>
<div class="t" style="left:458.75px;top:491px;">收款率 (%)</div>
<div class="t" style="left:505px;top:491px;font-size:8.700px;letter-spacing:.2px">0.0</div>
<i class="ul" style="left:503.75px;top:502px;width:95.25px;background:#b3b09f"></i>
<div class="t" style="left:453px;top:508px;">余款支付日期</div>
<div class="a" style="left:503px;top:507.5px;width:85.75px;height:14.5px;background:#ff8000;border:1px solid #7f9db9"></div><div class="a" style="left:588.75px;top:507.5px;width:10.25px;height:14.5px;background:linear-gradient(180deg,#e3ebfb,#b4c8f2);border:1px solid #9ab0dc"></div><svg class="a" style="left:590.75px;top:512.0px" width="6" height="5" viewBox="0 0 6 5"><path d="M.8 1l2.200 2.500L5.200 1" stroke="#1c2f66" stroke-width="1.200" fill="none"/></svg>
<div class="t" style="left:620px;top:491px;">交货方式</div>
<i class="ul" style="left:656px;top:502px;width:126px;background:#b3b09f"></i>
<div class="t" style="left:620px;top:509px;">交货日期</div>
<div class="a" style="left:654.5px;top:507.5px;width:71.5px;height:14.5px;background:#ff8000;border:1px solid #7f9db9"></div><div class="a" style="left:726px;top:507.5px;width:10px;height:14.5px;background:linear-gradient(180deg,#e3ebfb,#b4c8f2);border:1px solid #9ab0dc"></div><svg class="a" style="left:728px;top:512.0px" width="6" height="5" viewBox="0 0 6 5"><path d="M.8 1l2.200 2.500L5.200 1" stroke="#1c2f66" stroke-width="1.200" fill="none"/></svg>
<div class="a" style="left:741px;top:507.500px;width:42px;height:13px;background:#ff8000;border:1px solid #7f9db9"></div>
<div class="a" style="left:772.500px;top:508.500px;width:9.500px;height:5.500px;background:linear-gradient(180deg,#e3ebfb,#b4c8f2);border:1px solid #9ab0dc"></div><div class="a" style="left:772.500px;top:514px;width:9.500px;height:5.500px;background:linear-gradient(180deg,#e3ebfb,#b4c8f2);border:1px solid #9ab0dc"></div>
<svg class="a" style="left:774.500px;top:509.500px" width="6" height="9" viewBox="0 0 6 9"><path d="M1 3l2-2 2 2M1 6l2 2 2-2" stroke="#1c2f66" stroke-width="1" fill="none"/></svg>
<div class="a" id="status">
<svg class="a" style="left:7px;top:4.500px" width="9" height="9" viewBox="0 0 9 9"><path d="M0 2.800h8M6 .8l2 2M9 6.200H1M3 8.200l-2-2" stroke="#fff" stroke-width="1.100" fill="none"/></svg>
<svg class="a" style="left:25px;top:4px" width="10" height="10" viewBox="0 0 10 10"><rect x=".8" y="5" width="4" height="4" rx="1.200" fill="none" stroke="#ffd21c" stroke-width="1.200"/><rect x="5.500" y="1" width="3.800" height="3.200" rx=".8" fill="none" stroke="#ffd21c" stroke-width="1.200"/><path d="M4 5.500L6 4" stroke="#ffd21c" stroke-width="1.100"/></svg>
<div class="t" style="left:38px;top:3.0px;color:#a8e63a;font-size:8.300px;">网络情况<span style="letter-spacing:1.500px">:</span>良好</div>
<svg class="a" style="left:110.500px;top:4.300px" width="10" height="10" viewBox="0 0 10 10"><rect y=".5" width="10" height="2.500" fill="#ffd21c"/><rect y="3.800" width="10" height="2.500" fill="#ffd21c"/><rect y="7.100" width="10" height="2.500" fill="#ffd21c"/></svg>
<div class="t" style="left:123.5px;top:3.0px;color:#fff;font-size:8.300px;">服务器<span style="letter-spacing:.55px">:127.0.0.1:7798</span></div>
<svg class="a" style="left:237.500px;top:4.300px" width="11" height="10" viewBox="0 0 11 10"><ellipse cx="6.500" cy="3" rx="4" ry="2" fill="#ffd21c"/><ellipse cx="4.500" cy="5.500" rx="4" ry="2" fill="#f2b800" stroke="#116e9a" stroke-width=".5"/><ellipse cx="6" cy="7.800" rx="4" ry="2" fill="#ffd21c" stroke="#116e9a" stroke-width=".5"/></svg>
<div class="t" style="left:250px;top:3.0px;color:#fff;font-size:8.300px;letter-spacing:-.1px">账套：演示账套</div>
<svg class="a" style="left:365px;top:4.300px" width="10" height="9" viewBox="0 0 10 9"><path d="M1 4.500L4 7.500 9 1.500" stroke="#ffd21c" stroke-width="1.800" fill="none"/></svg>
<div class="t" style="left:377.5px;top:3.0px;color:#a8e63a;font-size:8.300px;">正版授权|终身使用</div>
<svg class="a" style="left:454.500px;top:4.300px" width="10" height="10" viewBox="0 0 10 10"><path d="M5 .5v5.500M2.500 3.800L5 6.300l2.500-2.500M.8 7v2.200h8.400V7" stroke="#ffd21c" stroke-width="1.400" fill="none"/></svg>
<div class="t" style="left:468px;top:3.0px;color:#fff;font-size:8.300px;">导入证书</div>
<svg class="a" style="left:507px;top:4px" width="11" height="11" viewBox="0 0 11 11"><circle cx="5.500" cy="3.500" r="2.800" fill="#ffd21c"/><path d="M.5 10.500c0-5 10-5 10 0z" fill="#ffd21c"/></svg>
<div class="t" style="left:520.5px;top:3.0px;color:#fff;font-size:8.300px;">在线客服</div>
<svg class="a" style="left:561px;top:4px" width="9" height="11" viewBox="0 0 9 11"><path d="M2.300 5V3.200a2.200 2.200 0 014.400 0V5" stroke="#ffd21c" stroke-width="1.300" fill="none"/><rect x=".5" y="4.800" width="8" height="6" rx="1" fill="#ffd21c"/><circle cx="4.500" cy="7.600" r="1" fill="#116e9a"/></svg>
<div class="t" style="left:573px;top:3.0px;color:#fff;font-size:8.300px;">锁屏</div>
<svg class="a" style="left:686px;top:3.500px" width="12" height="12" viewBox="0 0 12 12"><circle cx="6" cy="6" r="5.300" fill="none" stroke="#ffd21c" stroke-width="1.100"/><circle cx="6" cy="4.500" r="1.700" fill="#ffd21c"/><path d="M2.800 9.500c0-3.500 6.400-3.500 6.400 0z" fill="#ffd21c"/></svg>
<div class="t" style="left:700.5px;top:3.0px;color:#fff;font-size:8.300px;">超级用户</div>
<svg class="a" style="left:746px;top:4.300px" width="10" height="9" viewBox="0 0 10 9"><path d="M0 3h7M5 .8L7.500 3 5 5" stroke="#ffd21c" stroke-width="1.600" fill="none"/><path d="M10 6.200H3M5 4L2.500 6.200 5 8.400" stroke="#ffd21c" stroke-width="1.600" fill="none"/></svg>
<div class="t" style="left:758.75px;top:3.0px;color:#fff;font-size:8.300px;">切换用户</div>
</div>
<!-- frame -->
<i class="a" style="left:0;top:0;width:1px;height:550px;background:#1c2c38"></i><i class="a" style="left:0;top:0;width:800px;height:1px;background:#12324c"></i><i class="a" style="left:0;top:548.500px;width:800px;height:1.500px;background:#0c5274"></i>
</div>
</body>
</html>
